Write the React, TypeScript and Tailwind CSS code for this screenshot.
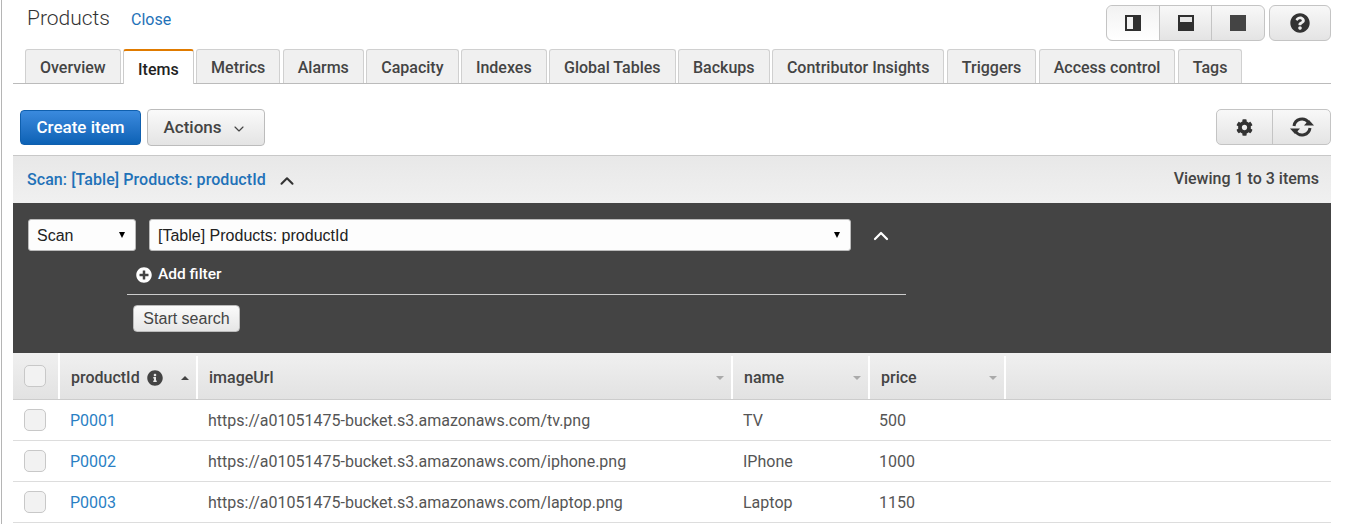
import { ChevronDown, ChevronUp } from 'lucide-react';
import { FaCog, FaInfoCircle, FaPlusCircle, FaQuestionCircle } from 'react-icons/fa';

const tabs = [
  'Overview',
  'Items',
  'Metrics',
  'Alarms',
  'Capacity',
  'Indexes',
  'Global Tables',
  'Backups',
  'Contributor Insights',
  'Triggers',
  'Access control',
  'Tags',
];

const rows = [
  { id: 'P0001', url: 'https://a01051475-bucket.s3.amazonaws.com/tv.png', name: 'TV', price: '500' },
  { id: 'P0002', url: 'https://a01051475-bucket.s3.amazonaws.com/iphone.png', name: 'IPhone', price: '1000' },
  { id: 'P0003', url: 'https://a01051475-bucket.s3.amazonaws.com/laptop.png', name: 'Laptop', price: '1150' },
];

const columns = 'grid grid-cols-[47px_138px_535px_137px_136px_1fr]';

function Checkbox() {
  return <div className="h-[22px] w-[22px] rounded-[5px] border border-[#c8c8c8] bg-[#f2f2f2]" />;
}

function Caret({ active }: { active?: boolean }) {
  return (
    <span
      className={
        active
          ? 'h-0 w-0 border-x-[4px] border-b-[4px] border-x-transparent border-b-[#444]'
          : 'h-0 w-0 border-x-[4px] border-t-[4px] border-x-transparent border-t-[#aaa]'
      }
    />
  );
}

function Select({ label, className }: { label: string; className: string }) {
  return (
    <div
      className={`flex h-[32px] items-center justify-between rounded-[3px] border border-[#bbb] bg-[#fdfdfd] pl-[8px] pr-[10px] pt-[2px] font-['Liberation_Sans',sans-serif] text-[16px] text-[#222] ${className}`}
    >
      <span>{label}</span>
      <span className="mb-[3px] h-0 w-0 border-x-[3.5px] border-t-[6px] border-x-transparent border-t-black" />
    </div>
  );
}

function ViewIcon({ mode }: { mode: 'side' | 'bottom' | 'full' }) {
  return (
    <svg width="16" height="16" viewBox="0 0 16 16">
      <rect width="16" height="16" fill={mode === 'full' ? '#444' : '#2f2f2f'} />
      {mode === 'side' && <rect x="2" y="2" width="6" height="12" fill="#f2f2f2" />}
      {mode === 'bottom' && <rect x="2" y="2" width="12" height="5" fill="#e6e6e6" />}
    </svg>
  );
}

function RefreshIcon() {
  return (
    <svg width="24" height="22" viewBox="0 0 24 22" fill="none">
      <path d="M4 10A8 8 0 0 1 18.5 6.5" stroke="#333" strokeWidth="3" />
      <path d="M20 12A8 8 0 0 1 5.5 15.5" stroke="#333" strokeWidth="3" />
      <path d="M14 9.5h10l-5-5.5z" fill="#333" />
      <path d="M10 12.5H0l5 5.5z" fill="#333" />
    </svg>
  );
}

export default function App() {
  return (
    <div className="h-[524px] w-[1346px] overflow-hidden bg-white font-['Roboto',sans-serif]">
      <div className="ml-px h-full border-l border-[#b5b5b5] pl-[11px] pr-[15px]">
        <div className="flex h-[49px] items-start justify-between">
          <div className="flex items-baseline pl-[14px] pt-[5px]">
            <h1 className="text-[21px] font-light leading-[26px] text-[#333]">Products</h1>
            <a className="ml-[21px] text-[16px] text-[#1f72b8]">Close</a>
          </div>
          <div className="flex gap-[4px] pt-[5px]">
            <div className="flex h-[36px] rounded-[6px] border border-[#c4c4c4] bg-gradient-to-b from-[#f8f8f8] to-[#e4e4e4]">
              <div className="flex w-[52px] items-center justify-center rounded-l-[6px] bg-gradient-to-b from-[#f2f2f2] to-white">
                <ViewIcon mode="side" />
              </div>
              <div className="flex w-[52px] items-center justify-center border-l border-[#c4c4c4]">
                <ViewIcon mode="bottom" />
              </div>
              <div className="flex w-[53px] items-center justify-center border-l border-[#c4c4c4]">
                <ViewIcon mode="full" />
              </div>
            </div>
            <div className="flex h-[36px] w-[62px] items-center justify-center rounded-[6px] border border-[#c4c4c4] bg-gradient-to-b from-[#f8f8f8] to-[#e4e4e4]">
              <FaQuestionCircle className="text-[20px] text-[#333]" />
            </div>
          </div>
        </div>

        <div className="flex h-[35px] gap-[2.4px] border-b border-[#bbb] pl-[12px]">
          {tabs.map((tab) =>
            tab === 'Items' ? (
              <div
                key={tab}
                className="relative z-10 -mb-px flex h-[35px] items-center rounded-t-[3px] border-x border-t-2 border-x-[#ccc] border-t-[#e07b00] bg-white px-[14px] pt-[4px] text-[16px] font-medium text-[#222]"
              >
                {tab}
              </div>
            ) : (
              <div
                key={tab}
                className="flex h-[34px] items-center rounded-t-[3px] border-x border-t border-[#d0d0d0] bg-[#f0f0f0] px-[14px] pt-[2px] text-[16px] font-medium text-[#444]"
              >
                {tab}
              </div>
            ),
          )}
        </div>

        <div className="flex h-[71px] items-start justify-between pl-[7px] pt-[25px]">
          <div className="flex items-center gap-[6px]">
            <button className="h-[35px] w-[121px] rounded-[4px] border border-[#0f5fae] bg-gradient-to-b from-[#3a8ade] to-[#0b62b5] pt-[1px] text-[17px] font-medium text-white">
              Create item
            </button>
            <button className="flex h-[37px] w-[118px] items-center justify-center gap-[9px] rounded-[4px] border border-[#bcbcbc] bg-gradient-to-b from-[#fafafa] to-[#e4e4e4] pr-[2px] text-[17px] font-medium text-[#444]">
              Actions
              <ChevronDown size={16} strokeWidth={1.75} className="mt-[3px] text-[#444]" />
            </button>
          </div>
          <div className="flex h-[36px] w-[115px] rounded-[5px] border border-[#c4c4c4] bg-gradient-to-b from-[#f8f8f8] to-[#e4e4e4]">
            <div className="flex w-[55px] items-center justify-center">
              <FaCog className="text-[17px] text-[#333]" />
            </div>
            <div className="flex flex-1 items-center justify-center border-l border-[#c4c4c4]">
              <RefreshIcon />
            </div>
          </div>
        </div>

        <div className="flex h-[48px] items-center justify-between border-t border-[#c8c8c8] bg-gradient-to-b from-[#e8e8e8] to-[#f0f0f0] pl-[14px] pr-[12px]">
          <div className="flex items-center gap-[10px]">
            <span className="text-[16px] font-medium tracking-[0.06px] text-[#1f72b8]">Scan: [Table] Products: productId</span>
            <ChevronUp size={22} strokeWidth={2.25} className="mt-[2px] text-[#333]" />
          </div>
          <span className="mb-[2px] text-[16px] font-medium text-[#444]">Viewing 1 to 3 items</span>
        </div>

        <div className="h-[150px] bg-[#444] pl-[15px] pt-[16px]">
          <div className="flex items-center gap-[13px]">
            <Select label="Scan" className="w-[108px]" />
            <Select label="[Table] Products: productId" className="w-[702px]" />
            <ChevronUp size={24} strokeWidth={2.25} className="ml-[5px] mt-[1px] text-white" />
          </div>
          <div className="mt-[12px] flex items-center gap-[6px] pl-[108px] text-[15.5px] font-medium text-white">
            <FaPlusCircle className="text-[16px]" />
            Add filter
          </div>
          <div className="ml-[99px] mt-[8px] w-[779px] border-t border-[#ccc]" />
          <button className="ml-[105px] mt-[10px] h-[27px] w-[107px] rounded-[4px] border border-[#bbb] bg-gradient-to-b from-[#fbfbfb] to-[#e6e6e6] font-['Liberation_Sans',sans-serif] text-[16px] text-[#444]">
            Start search
          </button>
        </div>

        <div className={`${columns} h-[47px] border-b border-[#ccc] bg-gradient-to-b from-[#f0f0f0] to-[#e2e2e2] pt-[3px] text-[16px] font-medium text-[#444]`}>
          <div className="-mt-[3px] flex items-center border-r-2 border-white pl-[11px]">
            <Checkbox />
          </div>
          <div className="flex items-center justify-between border-r-2 border-white pl-[11px] pr-[7px]">
            <span className="flex items-center gap-[7px]">
              productId
              <FaInfoCircle className="text-[16px] text-[#444]" />
            </span>
            <Caret active />
          </div>
          {['imageUrl', 'name', 'price'].map((col) => (
            <div key={col} className="flex items-center justify-between border-r-2 border-white pl-[11px] pr-[7px]">
              {col}
              <Caret />
            </div>
          ))}
          <div />
        </div>

        {rows.map((row) => (
          <div key={row.id} className={`${columns} h-[41px] border-b border-[#ddd] text-[16px] text-[#555]`}>
            <div className="flex items-center pl-[11px]">
              <Checkbox />
            </div>
            <div className="flex items-center pl-[10px] pt-[1px] text-[#2a7fc4]">{row.id}</div>
            <div className="flex items-center pl-[10px] pt-[1px]">{row.url}</div>
            <div className="flex items-center pl-[10px] pt-[1px]">{row.name}</div>
            <div className="flex items-center pl-[9px] pt-[1px]">{row.price}</div>
            <div />
          </div>
        ))}
      </div>
    </div>
  );
}
